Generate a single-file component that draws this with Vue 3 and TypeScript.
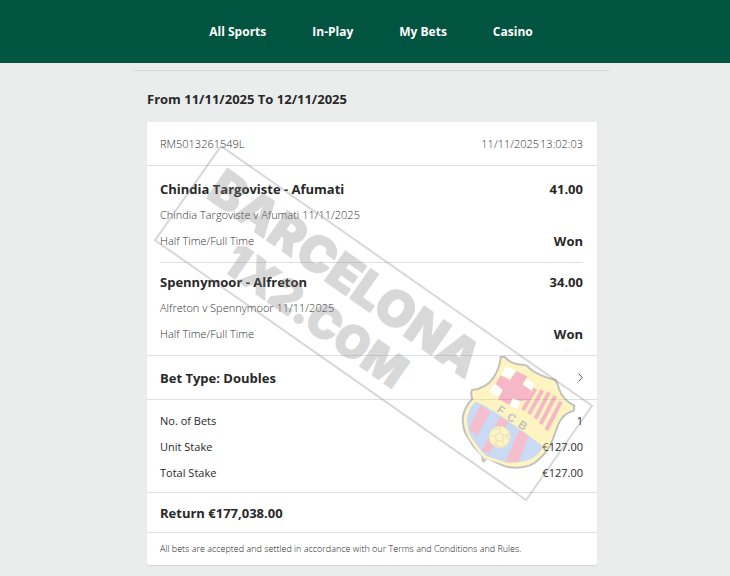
<script setup lang="ts">
interface Selection {
  name: string
  odds: string
  event: string
  market: string
  result: string
}

interface Total {
  label: string
  value: string
}

const links: string[] = ['All Sports', 'In-Play', 'My Bets', 'Casino']

const selections: Selection[] = [
  {
    name: 'Chindia Targoviste - Afumati',
    odds: '41.00',
    event: 'Chindia Targoviste v Afumati 11/11/2025',
    market: 'Half Time/Full Time',
    result: 'Won',
  },
  {
    name: 'Spennymoor - Alfreton',
    odds: '34.00',
    event: 'Alfreton v Spennymoor 11/11/2025',
    market: 'Half Time/Full Time',
    result: 'Won',
  },
]

const totals: Total[] = [
  { label: 'No. of Bets', value: '1' },
  { label: 'Unit Stake', value: '€127.00' },
  { label: 'Total Stake', value: '€127.00' },
]
</script>

<template>
  <div class="page">
    <header class="topbar">
      <nav class="nav">
        <a v-for="link in links" :key="link" href="#" class="nav-link">{{ link }}</a>
      </nav>
    </header>

    <main class="content">
      <div class="history">
        <h1 class="period">From 11/11/2025 To 12/11/2025</h1>

        <article class="card">
          <div class="receipt">
            <span>RM5013261549L</span>
            <span class="stamp"><span>11/11/2025</span><span>13:02:03</span></span>
          </div>

          <div class="selections">
            <section v-for="s in selections" :key="s.name" class="selection">
              <div class="line strong"><h2 class="name">{{ s.name }}</h2><span>{{ s.odds }}</span></div>
              <div class="line muted">{{ s.event }}</div>
              <div class="line">
                <span class="muted">{{ s.market }}</span><span class="strong">{{ s.result }}</span>
              </div>
            </section>
          </div>

          <button type="button" class="bet-type">
            <span>Bet Type: Doubles</span>
            <svg class="chevron" viewBox="0 0 5 9" aria-hidden="true">
              <path d="M0.6 0.6 L4.3 4.5 L0.6 8.4" fill="none" stroke="#555" stroke-width="1" />
            </svg>
          </button>

          <dl class="totals">
            <div v-for="t in totals" :key="t.label" class="line">
              <dt>{{ t.label }}</dt>
              <dd>{{ t.value }}</dd>
            </div>
          </dl>

          <div class="return">Return €177,038.00</div>
          <p class="terms">All bets are accepted and settled in accordance with our Terms and Conditions and Rules.</p>

          <svg class="watermark" viewBox="0 0 442 358" aria-hidden="true">
            <g transform="translate(69 1) rotate(35)" opacity="0.3">
              <rect x="0" y="0" width="453" height="115" fill="none" stroke="#808080" stroke-width="2" />
              <text x="175" y="51" class="mark">BARCELONA</text>
              <text x="175" y="101" class="mark mark-small">1X2.COM</text>
            </g>
            <g transform="translate(288 195) scale(0.33333)" opacity="0.34" stroke-linejoin="round">
              <clipPath id="crest-inner">
                <path d="M191 64 Q214 82 243 81 Q266 84 284 99 Q314 110 343 126 Q354 132 361 155 Q370 184 394 207 Q367 223 350 251 Q333 272 321 309 Q303 347 274 362 Q240 379 205 371 Q169 366 133 355 Q113 340 96 309 Q72 281 76 239 Q77 200 104 181 Q101 166 104 157 Q141 147 160 125 Q180 98 191 64 Z" />
              </clipPath>
              <path d="M182 51 L194 51 Q216 75 247 74 Q263 75 267 84 Q296 108 343 119 Q352 124 357 147 Q369 181 403 197 L401 212 Q368 219 353 257 Q340 298 327 323 Q299 364 268 377 Q233 388 195 379 Q160 364 142 353 L130 365 L125 344 Q101 325 88 298 Q65 271 69 227 Q76 197 97 177 Q91 163 96 150 Q138 145 159 115 Q180 84 182 51 Z" fill="#fce14e" stroke="#4f4f3a" stroke-width="6" />
              <g clip-path="url(#crest-inner)">
                <path d="M199 78 L228 93 L210 115 L182 106 Z" fill="#fff" />
                <path d="M262 116 L284 133 L266 158 L247 139 Z" fill="#fff" />
                <path d="M164 132 L189 148 L174 171 L147 154 Z" fill="#fff" />
                <path d="M218 175 L242 184 L230 207 L205 193 Z" fill="#fff" />
                <path d="M229 94 L262 109 L247 133 L274 152 L260 180 L242 184 L218 175 L209 195 L174 177 L189 150 L167 132 L181 106 L210 120 Z" fill="#e6305b" />
                <g stroke="#e6305b" stroke-width="12">
                  <path d="M286 146 L249 210" />
                  <path d="M307 151 L267 222" />
                  <path d="M327 157 L286 236" />
                  <path d="M346 168 L302 252" />
                  <path d="M363 185 L319 270" />
                </g>
                <path d="M64 175 Q107 176 168 218 Q240 265 318 326 L300 400 L60 390 Z" fill="#6596df" />
                <path d="M121 195 L151 216 L111 289 L87 266 Z" fill="#df426d" />
                <path d="M181 229 L207 246 L148 340 L125 333 Z" fill="#df426d" />
                <path d="M238 269 L266 287 L228 385 L195 370 Z" fill="#df426d" />
              </g>
              <path d="M104 182 Q80 202 77 238 Q78 282 100 307 Q119 337 136 351 Q163 361 199 371 Q248 374 277 359 Q302 347 317 315" fill="none" stroke="#fce14e" stroke-width="8" />
              <circle cx="179" cy="291" r="32" fill="#fce14e" stroke="#b9a447" stroke-width="2" />
              <path d="M179 278 L192 287 L187 302 L171 303 L165 288 Z M179 278 L181 260 M192 287 L210 284 M187 302 L196 321 M171 303 L160 316 M165 288 L148 287 M160 266 Q178 270 181 260 M207 278 Q196 291 210 302 M160 316 Q176 314 181 323" fill="none" stroke="#c9b04a" stroke-width="4" />
              <text transform="translate(168 214) rotate(35)" class="initials"><tspan x="0">F</tspan><tspan x="37">C</tspan><tspan x="78">B</tspan></text>
            </g>
          </svg>
        </article>
      </div>
    </main>
  </div>
</template>

<style>
body {
  margin: 0;
  background: #ebeded;
}
</style>

<style scoped>
.page {
  min-height: 100vh;
  background: #ebeded;
  color: #282828;
  font-family: 'Open Sans', 'Noto Sans', sans-serif;
  font-size: 11px;
}

.topbar {
  display: flex;
  justify-content: center;
  align-items: center;
  height: 63px;
  padding-left: 12px;
  background: #005440;
}

.nav {
  display: flex;
  gap: 46px;
}

.nav-link {
  color: #fff;
  font-size: 12px;
  font-weight: 700;
  text-decoration: none;
}

.content {
  padding: 7px 0 10px 13px;
}

.history {
  box-sizing: border-box;
  max-width: 477px;
  margin: 0 auto;
  padding: 0 13px 0 14px;
  border-top: 1px solid #d8dad9;
}

.period {
  margin: 0;
  padding: 16px 0 11px;
  font-size: 13px;
  line-height: 24px;
  font-weight: 700;
}

.card {
  position: relative;
  background: #fff;
  border-radius: 2px;
  box-shadow: 0 1px 1px #d2d4d3;
}

.receipt {
  display: flex;
  justify-content: space-between;
  align-items: center;
  height: 43px;
  padding: 0 14px 0 13px;
  border-bottom: 1px solid #dfdfdf;
  color: #333;
  font-weight: 300;
}

.stamp {
  display: flex;
  gap: 1px;
}

.selections {
  padding: 4px 14px 0 13px;
  border-bottom: 1px solid #dfdfdf;
}

.selection {
  padding: 6px 0 8px;
}

.selection + .selection {
  border-top: 1px solid #dfdfdf;
}

.line {
  display: flex;
  justify-content: space-between;
  line-height: 26px;
}

.muted {
  color: #333;
  font-weight: 300;
}

.strong,
.name {
  margin: 0;
  font-size: 13px;
  font-weight: 700;
}

.bet-type {
  display: flex;
  justify-content: space-between;
  align-items: center;
  box-sizing: border-box;
  width: 100%;
  height: 44px;
  padding: 0 14px 0 13px;
  border: 0;
  border-bottom: 1px solid #dfdfdf;
  background: transparent;
  color: inherit;
  font-family: inherit;
  font-size: 13px;
  font-weight: 700;
}

.chevron {
  width: 5px;
  height: 9px;
}

.totals {
  margin: 0;
  padding: 8px 14px 6px 13px;
  border-bottom: 1px solid #dfdfdf;
}

.totals dd {
  margin: 0;
}

.return {
  padding: 2px 13px 0;
  border-bottom: 1px solid #dfdfdf;
  font-size: 13px;
  font-weight: 700;
  line-height: 37px;
}

.terms {
  margin: 0;
  padding: 0 13px;
  color: #222;
  font-size: 9px;
  font-weight: 300;
  line-height: 32px;
}

.watermark {
  position: absolute;
  top: 23px;
  left: 5px;
  width: 442px;
  height: 358px;
  pointer-events: none;
}

.mark {
  fill: #808080;
  stroke: #808080;
  stroke-width: 1px;
  font-family: Inter, sans-serif;
  font-size: 50px;
  font-weight: 900;
  text-anchor: middle;
}

.mark-small {
  font-size: 45px;
}

.initials {
  fill: #4f4f2d;
  font-family: 'Liberation Sans', sans-serif;
  font-size: 34px;
  font-weight: 700;
}
</style>
